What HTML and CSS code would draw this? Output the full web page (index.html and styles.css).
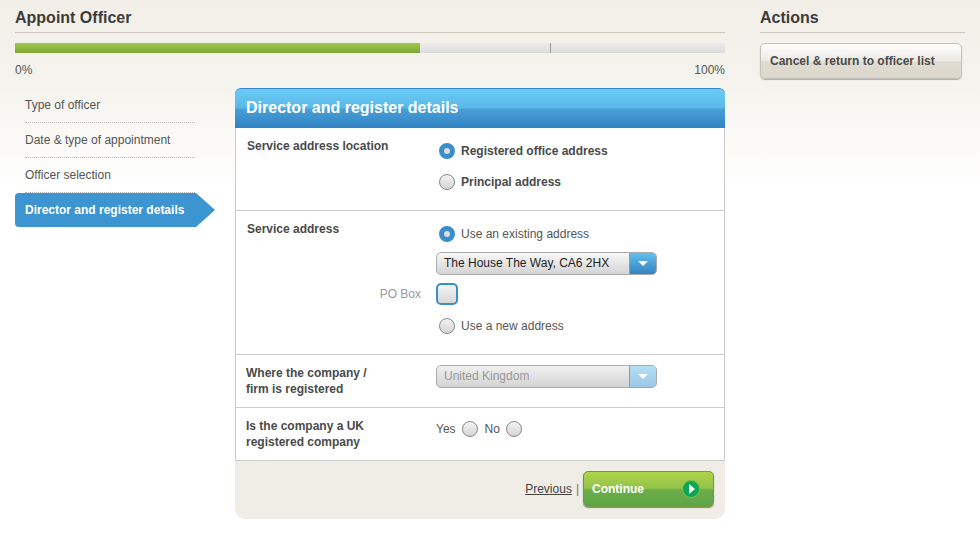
FILE: index.html
```html
<!DOCTYPE html>
<html lang="en">
<head>
    <meta charset="UTF-8">
    <title>Appoint Officer</title>
    <link rel="stylesheet" href="styles.css">
</head>
<body>
    <div class="page">
        <div class="main">
            <h1 class="title">Appoint Officer</h1>
            <div class="progress">
                <div class="progress-fill"></div>
                <div class="progress-tick"></div>
            </div>
            <div class="progress-labels"><span>0%</span><span>100%</span></div>
            <div class="content">
                <ul class="steps">
                    <li>Type of officer</li>
                    <li>Date &amp; type of appointment</li>
                    <li>Officer selection</li>
                    <li class="active">Director and register details</li>
                </ul>
                <div class="panel">
                    <h2 class="panel-title">Director and register details</h2>
                    <div class="row row-location">
                        <div class="row-label">Service address location</div>
                        <div class="row-fields">
                            <label class="option strong"><span class="radio checked"></span>Registered office address</label>
                            <label class="option strong"><span class="radio"></span>Principal address</label>
                        </div>
                    </div>
                    <div class="row row-address">
                        <div class="row-label">Service address</div>
                        <div class="row-fields">
                            <label class="option"><span class="radio checked"></span>Use an existing address</label>
                            <div class="select">
                                <span class="select-value">The House The Way, CA6 2HX</span>
                                <span class="select-btn"><span class="caret"></span></span>
                            </div>
                            <div class="pobox">
                                <span class="pobox-label">PO Box</span>
                                <span class="checkbox"></span>
                            </div>
                            <label class="option"><span class="radio"></span>Use a new address</label>
                        </div>
                    </div>
                    <div class="row row-country">
                        <div class="row-label">Where the company /<br>firm is registered</div>
                        <div class="row-fields">
                            <div class="select disabled">
                                <span class="select-value">United Kingdom</span>
                                <span class="select-btn"><span class="caret"></span></span>
                            </div>
                        </div>
                    </div>
                    <div class="row row-uk">
                        <div class="row-label">Is the company a UK<br>registered company</div>
                        <div class="row-fields yes-no">
                            <span>Yes</span><span class="radio"></span>
                            <span class="no-label">No</span><span class="radio"></span>
                        </div>
                    </div>
                    <div class="panel-footer">
                        <a href="#" class="prev">Previous</a>
                        <span class="sep">|</span>
                        <a href="#" class="continue">
                            <span>Continue</span>
                            <span class="continue-icon"></span>
                        </a>
                    </div>
                </div>
            </div>
        </div>
        <div class="side">
            <h1 class="title">Actions</h1>
            <a href="#" class="cancel-btn">Cancel &amp; return to officer list</a>
        </div>
    </div>
</body>
</html>
```

FILE: styles.css
```css
html, body {
    margin: 0;
    padding: 0;
}
body {
    min-height: 560px;
    font-family: 'Liberation Sans', Arial, sans-serif;
    font-size: 12px;
    color: #444;
    background: linear-gradient(#f2efe8 0, #f5f3ed 80px, #fff 190px) no-repeat #fff;
}
.page {
    display: flex;
    gap: 35px;
    padding: 0 15px;
}
.main {
    width: 710px;
}
.side {
    width: 205px;
}
.title {
    margin: 0;
    height: 32px;
    line-height: 35px;
    font-size: 16px;
    font-weight: bold;
    color: #3c3c3c;
    border-bottom: 1px solid #ccc8c0;
}
.progress {
    position: relative;
    height: 10px;
    margin-top: 10px;
    background: linear-gradient(#ececec, #dcdcdc);
}
.progress-fill {
    width: 405px;
    height: 10px;
    background: linear-gradient(#a0c94a, #7da534);
}
.progress-tick {
    position: absolute;
    left: 535px;
    top: 0;
    width: 1px;
    height: 10px;
    background: #999;
}
.progress-labels {
    display: flex;
    justify-content: space-between;
    margin-top: 10px;
    line-height: 14px;
    color: #555;
}
.content {
    display: flex;
    margin-top: 11px;
}
.steps {
    list-style: none;
    width: 220px;
    margin: 0;
    padding: 0;
}
.steps li {
    width: 170px;
    height: 34px;
    line-height: 34px;
    margin-left: 10px;
    border-bottom: 1px dotted #bbb;
    color: #555;
}
.steps li.active {
    width: 181px;
    margin-left: 0;
    padding-left: 10px;
    padding-right: 10px;
    height: 34px;
    line-height: 34px;
    border: 0;
    font-weight: bold;
    color: #fff;
    background: #3c94d0;
    border-radius: 4px 0 0 4px;
    clip-path: polygon(0 0, 181px 0, 200px 17px, 181px 34px, 0 34px);
}
.panel {
    width: 490px;
}
.panel-title {
    margin: 0;
    height: 39px;
    padding-left: 11px;
    line-height: 37px;
    font-size: 16px;
    font-weight: bold;
    color: #fff;
    border-top: 1px solid #2f84c4;
    border-radius: 6px 6px 0 0;
    background: linear-gradient(#6accf6 0, #5ab8e8 19px, #4a9fd8 20px, #2f82c0 100%);
}
.row {
    display: flex;
    box-sizing: border-box;
    background: #fff;
    border: 1px solid #ccc;
    border-top: 0;
}
.row-location { height: 83px; }
.row-address { height: 144px; }
.row-country { height: 53px; }
.row-uk { height: 53px; }
.row-label {
    width: 200px;
    box-sizing: border-box;
    padding-left: 10px;
    padding-top: 10px;
    line-height: 16px;
    font-weight: bold;
    color: #4a4a4a;
}
.row-location .row-label,
.row-address .row-label {
    padding-left: 11px;
}
.row-fields {
    flex: 1;
}
.option {
    display: flex;
    align-items: center;
    gap: 6px;
    padding-left: 3px;
    color: #555;
}
.option.strong {
    font-weight: bold;
    color: #4a4a4a;
}
.row-location .option { height: 31px; }
.row-location .row-fields { padding-top: 7px; }
.row-address .row-fields { padding-top: 14px; }
.row-address .option { height: 18px; }
.radio {
    display: inline-block;
    box-sizing: border-box;
    width: 16px;
    height: 16px;
    flex: none;
    border: 1px solid #888;
    border-radius: 50%;
    background: linear-gradient(#f4f4f4, #d4d4d4);
}
.radio.checked {
    border: 5px solid #3a8ecc;
    background: #ddd;
}
.select {
    display: flex;
    box-sizing: border-box;
    width: 221px;
    height: 23px;
    margin-top: 9px;
    border: 1px solid #aaa;
    border-radius: 5px;
    overflow: hidden;
    background: linear-gradient(#f8f8f8, #d4d4d4);
    color: #222;
}
.select-value {
    flex: 1;
    padding-left: 7px;
    line-height: 21px;
    border-right: 1px solid #999;
}
.select-btn {
    display: flex;
    align-items: center;
    justify-content: center;
    width: 26px;
    background: linear-gradient(#62c0ee, #4d9fd6 50%, #3583bd);
}
.caret {
    width: 0;
    height: 0;
    border-left: 5px solid transparent;
    border-right: 5px solid transparent;
    border-top: 5px solid #fff;
}
.select.disabled {
    margin-top: 10px;
    color: #999;
    background: linear-gradient(#f0f0f0, #d4d4d4);
}
.select.disabled .select-btn {
    background: linear-gradient(#b4e0f6, #9cc8e6);
}
.pobox {
    position: relative;
    height: 22px;
    margin: 8px 0 12px;
}
.pobox-label {
    position: absolute;
    right: 303px;
    top: 4px;
    white-space: nowrap;
    color: #999;
}
.checkbox {
    display: block;
    box-sizing: border-box;
    width: 22px;
    height: 22px;
    border: 2px solid #3a8ecc;
    border-radius: 5px;
    background: linear-gradient(#f4f4f4, #d8d8d8);
}
.yes-no {
    display: flex;
    align-items: center;
    align-self: flex-start;
    gap: 6px;
    height: 16px;
    margin-top: 13px;
    color: #555;
}
.no-label {
    margin-left: 1px;
}
.panel-footer {
    display: flex;
    align-items: flex-start;
    justify-content: flex-end;
    gap: 4px;
    box-sizing: border-box;
    height: 58px;
    padding: 10px 11px 0 0;
    background: #f0ede6;
    border-radius: 0 0 10px 10px;
}
.prev,
.sep {
    line-height: 37px;
}
.prev {
    color: #444;
}
.sep {
    color: #777;
}
.continue {
    display: flex;
    align-items: center;
    justify-content: space-between;
    box-sizing: border-box;
    width: 131px;
    height: 36px;
    padding: 0 13px 0 8px;
    font-weight: bold;
    color: #fff;
    text-decoration: none;
    border: 1px solid #6f9a3e;
    border-radius: 5px;
    background: linear-gradient(#aed34a 0, #93c44a 48%, #6cae48 52%, #5ea548 100%);
    box-shadow: 0 1px 1px #888;
}
.continue-icon {
    display: flex;
    align-items: center;
    justify-content: center;
    box-sizing: border-box;
    width: 18px;
    height: 18px;
    padding-left: 2px;
    border: 1px solid #86bb48;
    border-radius: 50%;
    background: #0aa654;
}
.continue-icon::before {
    content: '';
    width: 0;
    height: 0;
    border-left: 6px solid #fff;
    border-top: 5px solid transparent;
    border-bottom: 5px solid transparent;
}
.cancel-btn {
    display: block;
    box-sizing: border-box;
    width: 202px;
    height: 36px;
    margin-top: 10px;
    padding-left: 9px;
    line-height: 34px;
    font-weight: bold;
    color: #4a4a4a;
    text-decoration: none;
    border: 1px solid #c4c2bc;
    border-radius: 5px;
    background: linear-gradient(#fff 0, #ebe9e2 17px, #e0dcd2 18px, #dbd7cb 100%);
    box-shadow: 0 1px 1px #aaa;
}
```
